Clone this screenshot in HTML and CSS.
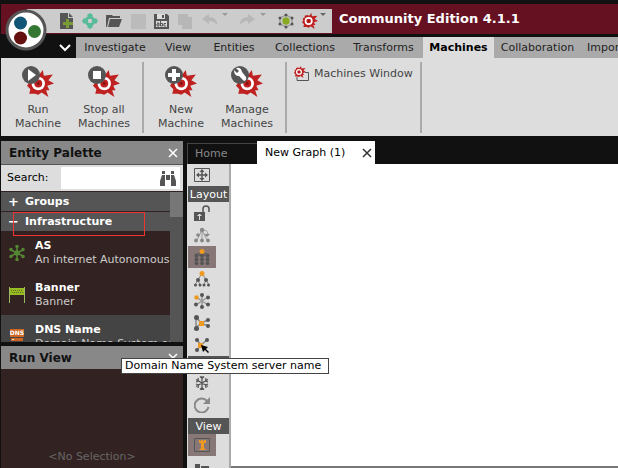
FILE: index.html
```
<!DOCTYPE html>
<html lang="en">
<head>
<meta charset="utf-8">
<title>Community Edition 4.1.1</title>
<link rel="stylesheet" href="styles.css">
</head>
<body>
<svg class="defs" aria-hidden="true">
  <symbol id="gear" viewBox="0 0 24 24">
    <path fill="#bf2020" d="M8 3l3 1 3-4 1 5 8-1-4 5 5 3-6 2 2 4-3 0 2 6-6-4-3 2-3-1-5 0 1-4-3-3 2-3-1-3 3-1 0-3z"/>
    <circle cx="10" cy="12" r="6" fill="#fff"/><circle cx="10" cy="12" r="3.500" fill="#bf2020"/><circle cx="10" cy="12" r="1.300" fill="#811"/>
  </symbol>
</svg>
<div class="app">
  <header class="titlebar">
    <button class="logo" aria-label="Application menu">
      <svg viewBox="0 0 42 42"><circle cx="21" cy="21" r="19" fill="#fff" stroke="#555" stroke-width="3"/><circle cx="15.500" cy="14" r="6.500" fill="#157"/><circle cx="29.500" cy="22.500" r="6.500" fill="#373"/><circle cx="15.500" cy="29" r="6.500" fill="#611"/></svg>
    </button>
    <div class="quick">
      <button aria-label="New"><svg viewBox="0 0 16 16"><path fill="#555" d="M2 0h8v5h5v11H2z"/><path fill="#555" d="M11 0l4 4h-4z"/><path fill="#7a9c35" d="M8 6h3v3h4v3h-4v3H8v-3H5V9h3z"/></svg></button>
      <button aria-label="Import"><svg viewBox="0 0 16 16"><circle cx="8" cy="8" r="3.700" fill="none" stroke="#5b9" stroke-width="3"/><path fill="#5b9" d="M5 2l3-2 3 2-2 3H7zM5 14l3 2 3-2-2-3H7zM2 5L0 8l2 3 3-2V7zM14 5l2 3-2 3-3-2V7z"/></svg></button>
      <button aria-label="Open"><svg viewBox="0 0 16 16"><path fill="#555" d="M0 2h6l1 1h7v2H3L1 14H0zM4 6h12l-3 8H2z"/></svg></button>
      <button aria-label="Save" disabled><svg viewBox="0 0 16 16"><path fill="#bbb" d="M1 1h15v15H1z"/></svg></button>
      <button aria-label="Save as"><svg viewBox="0 0 16 16"><path fill="#555" d="M0 1h13l2 2v13H0z"/><path fill="#ddd" d="M3 1h8v5H3zM2 8h11v6H2z"/><path fill="#555" d="M8 2h2v3H8z"/><path fill="none" stroke="#555" d="M3 10h2v3H3v-2h2M6.500 8v5h2v-2.500h-2M12 10.500h-2V13h2"/></svg></button>
      <button aria-label="Copy" disabled><svg viewBox="0 0 16 16"><path fill="#b7b7b7" d="M0 1h10v3h4v12H4v-4H0z"/></svg></button>
      <button class="drop" aria-label="Undo" disabled><svg viewBox="0 0 30 16"><path fill="#b7b7b7" d="M0 6l7-5v3q8 0 8 8-3-4-8-4v3z"/><path fill="#999" d="M20 0h6l-3 3z"/></svg></button>
      <button class="drop" aria-label="Redo" disabled><svg viewBox="0 0 30 16"><path fill="#b7b7b7" d="M15 6L8 1v3q-8 0-8 8 3-4 8-4v3z"/><path fill="#999" d="M20 0h6l-3 3z"/></svg></button>
      <button aria-label="Transform hub"><svg viewBox="0 0 16 16"><path fill="none" stroke="#888" d="M8 2l6 3v6l-6 3-6-3V5z"/><circle cx="8" cy="8" r="3.700" fill="#8a2"/><g fill="#555"><circle cx="8" cy="2" r="1.500"/><circle cx="14" cy="5" r="1.500"/><circle cx="14" cy="11" r="1.500"/><circle cx="8" cy="14" r="1.500"/><circle cx="2" cy="11" r="1.500"/><circle cx="2" cy="5" r="1.500"/></g></svg></button>
      <button class="drop" aria-label="Run machine"><svg viewBox="0 0 30 16"><use href="#gear" width="16" height="16"/><path fill="#666" d="M18 0h6l-3 3z"/></svg></button>
    </div>
    <h1>Community Edition 4.1.1</h1>
  </header>
  <nav class="tabs">
    <button class="chevron" aria-label="Collapse ribbon"><svg viewBox="0 0 12 8"><path fill="none" stroke="#fff" stroke-width="2" d="M1 1l5 5 5-5"/></svg></button>
    <a href="#">Investigate</a><a href="#">View</a><a href="#">Entities</a><a href="#">Collections</a><a href="#">Transforms</a><a href="#" class="active">Machines</a><a href="#">Collaboration</a><a href="#" class="last">Import | Export</a>
  </nav>
  <section class="ribbon">
    <div class="group">
      <button class="big"><svg viewBox="0 0 32 32"><use href="#gear" x="5" y="3" width="27" height="29"/><circle cx="9" cy="9" r="9" fill="#555"/><path fill="#fff" d="M6 3v12l8-6z"/></svg>Run<br>Machine</button>
      <button class="big"><svg viewBox="0 0 32 32"><use href="#gear" x="5" y="3" width="27" height="29"/><circle cx="9" cy="9" r="9" fill="#555"/><path fill="#fff" d="M5 5h8v8H5z"/></svg>Stop all<br>Machines</button>
    </div>
    <div class="group">
      <button class="big"><svg viewBox="0 0 32 32"><use href="#gear" x="5" y="3" width="27" height="29"/><circle cx="9" cy="9" r="9" fill="#555"/><path fill="#fff" d="M7 3h4v4h4v4h-4v4H7v-4H3V7h4z"/></svg>New<br>Machine</button>
      <button class="big"><svg viewBox="0 0 32 32"><use href="#gear" x="5" y="3" width="27" height="29"/><circle cx="9" cy="9" r="9" fill="#555"/><path fill="#fff" d="M3 4l3 3 2-2-3-3q5-1 6 4l4 5q1 3-2 4l-5-5q-5 0-5-6z"/></svg>Manage<br>Machines</button>
    </div>
    <div class="group wide">
      <button class="small"><svg viewBox="0 0 16 16"><path fill="none" stroke="#555" d="M11 6.500h3.500v8H3V11"/><use href="#gear" width="12" height="12"/></svg>Machines Window</button>
    </div>
  </section>
  <main class="work">
    <aside class="side">
      <section class="palette">
        <h2>Entity Palette<button aria-label="Close palette"><svg viewBox="0 0 10 10"><path stroke="#fff" stroke-width="1.500" d="M1 1l8 8M9 1L1 9"/></svg></button></h2>
        <div class="search">
          <label for="q">Search:</label>
          <div class="field"><input id="q" type="text"><svg viewBox="0 0 16 15"><path fill="#555" d="M2 0h3v3H2zM11 0h3v3h-3zM2 4h3v11H0v-5zM11 4h3l2 6v5h-5zM6 4h4v5H6z"/></svg></div>
        </div>
        <div class="scroller">
          <div class="list">
            <button class="cat"><span>+</span>Groups</button>
            <button class="cat marked"><span>−</span>Infrastructure</button>
            <div class="entity">
              <svg viewBox="0 0 16 16"><g stroke="#583" stroke-width="1.500" fill="#583"><path d="M8 2v12M2 5l12 6M14 5L2 11"/><circle cx="8" cy="8" r="2"/><circle cx="8" cy="1.500" r="1"/><circle cx="8" cy="14.500" r="1"/><circle cx="2" cy="4.500" r="1"/><circle cx="14" cy="4.500" r="1"/><circle cx="2" cy="11.500" r="1"/><circle cx="14" cy="11.500" r="1"/></g></svg>
              <div><b>AS</b><p>An internet Autonomous System</p></div>
            </div>
            <div class="entity">
              <svg viewBox="0 0 16 16"><path fill="#9b2" d="M1 1h14v7H1z"/><path stroke="#9b6" d="M.5 0v16M15.500 0v16"/><path stroke="#562" stroke-dasharray="1 1" d="M2 3.500h12M3 5.500h11"/></svg>
              <div><b>Banner</b><p>Banner</p></div>
            </div>
            <div class="entity hover">
              <svg viewBox="0 0 16 16"><path fill="#c62" d="M1 0h14v8H1zM2 9h12v3H2zM1 13h14v3H1z"/><text x="8" y="6">DNS</text><path stroke="#ddd" d="M3 10.500h2M3 14.500h2"/></svg>
              <div><b>DNS Name</b><p>Domain Name System server name</p></div>
            </div>
          </div>
          <div class="track"><div class="thumb"></div></div>
        </div>
      </section>
      <section class="run">
        <h2>Run View<button aria-label="Close run view"><svg viewBox="0 0 10 10"><path stroke="#fff" stroke-width="1.500" d="M1 1l8 8M9 1L1 9"/></svg></button></h2>
        <p>&lt;No Selection&gt;</p>
      </section>
    </aside>
    <section class="editor">
      <div class="docs">
        <a href="#">Home</a>
        <div class="doc">New Graph (1)<button aria-label="Close graph"><svg viewBox="0 0 10 10"><path stroke="#333" stroke-width="1.500" d="M1 1l8 8M9 1L1 9"/></svg></button></div>
      </div>
      <div class="stage">
        <div class="tools">
          <button aria-label="Fit"><svg viewBox="0 0 16 16"><path fill="none" stroke="#555" d="M.5 1.500h15v13H.5z"/><path stroke="#555" stroke-width="1.500" d="M8 4v8M3 8h10"/><path fill="#555" d="M8 2l2.500 3h-5zM8 14l2.500-3h-5zM2 8l3-2.500v5zM14 8l-3-2.500v5z"/></svg></button>
          <h3>Layout</h3>
          <button aria-label="Lock"><svg viewBox="0 0 16 16"><path fill="#555" d="M0 7h11v9H0z"/><path fill="none" stroke="#555" stroke-width="1.500" d="M9 7V4q0-3 3-3t3 3v3"/><path fill="#ddd" d="M5 9h1l2 2H6v4H5v-4H3z"/></svg></button>
          <button aria-label="Auto layout"><svg viewBox="0 0 16 16"><path fill="none" stroke="#999" d="M8 3L3 13M8 3v10M8 3l5 10M9 3q5 0 5 5"/><g fill="#888"><circle cx="8" cy="3" r="2.200"/><circle cx="4" cy="8" r="1.800"/><circle cx="2" cy="13.500" r="1.900"/><circle cx="8" cy="13.500" r="1.900"/><circle cx="14" cy="13.500" r="1.900"/><path d="M10 7h6l-3 3z"/></g></svg></button>
          <button class="on" aria-label="Block"><svg viewBox="0 0 16 16"><path fill="none" stroke="#555" d="M8 3L2 6v8M8 3v11M8 3l6 3v8M8 3L5 7M8 3l3 4"/><g fill="#555"><circle cx="2.500" cy="6.500" r="2"/><circle cx="8" cy="6.500" r="2"/><circle cx="13.500" cy="6.500" r="2"/><circle cx="2.500" cy="10.500" r="2"/><circle cx="8" cy="10.500" r="2"/><circle cx="13.500" cy="10.500" r="2"/><circle cx="2.500" cy="14.300" r="1.800"/><circle cx="8" cy="14.300" r="1.800"/><circle cx="13.500" cy="14.300" r="1.800"/></g><circle cx="8" cy="2.500" r="2.500" fill="#e92"/></svg></button>
          <button aria-label="Hierarchical"><svg viewBox="0 0 16 16"><path fill="none" stroke="#888" d="M8 2L1 14M8 2l7 12M4 9l2 5M12 9l-2 5"/><g fill="#555"><circle cx="4" cy="9" r="2"/><circle cx="12" cy="9" r="2"/><circle cx="1.500" cy="14" r="1.500"/><circle cx="6" cy="14" r="1.500"/><circle cx="10" cy="14" r="1.500"/><circle cx="14.500" cy="14" r="1.500"/></g><circle cx="8" cy="2.500" r="2.500" fill="#e92"/></svg></button>
          <button aria-label="Circular"><svg viewBox="0 0 16 16"><path stroke="#999" stroke-width="1.500" d="M8 1v14M2 4l12 8M14 4L2 12"/><g fill="#555"><circle cx="8" cy="2" r="2"/><circle cx="14" cy="4.500" r="2"/><circle cx="14" cy="11.500" r="2"/><circle cx="8" cy="14" r="2"/><circle cx="2" cy="11.500" r="2"/></g><circle cx="2.500" cy="4.500" r="2.200" fill="#e92"/></svg></button>
          <button aria-label="Organic"><svg viewBox="0 0 16 16"><path fill="none" stroke="#888" stroke-width="1.500" d="M2 2v11l5-5 7-3M2 2l5 6 7 3"/><g fill="#555"><circle cx="2.500" cy="2.500" r="2.500"/><circle cx="2.500" cy="13.500" r="2.500"/><circle cx="14" cy="5" r="2"/><circle cx="14" cy="11" r="2"/></g><path fill="#e92" d="M5 6h5v5H5z"/></svg></button>
          <button aria-label="Interactive organic"><svg viewBox="0 0 16 16"><path fill="none" stroke="#888" stroke-width="1.500" d="M3 3l4 5 6-5M7 8l-4 5"/><g fill="#555"><circle cx="3" cy="3" r="2"/><circle cx="13" cy="3" r="2"/><circle cx="3" cy="13" r="2"/></g><path fill="#e92" d="M4 6h5v5H4z"/><path fill="#000" d="M7 8l7 2-2 2 3 3-1 1-3-3-2 2z"/></svg></button>
          <h3></h3>
          <button aria-label="Freeze"><svg viewBox="0 0 16 16"><path fill="none" stroke="#555" stroke-width="1.200" d="M8 1v14M2 4.500l12 7M14 4.500l-12 7M6 1.500l2 2 2-2M6 14.500l2-2 2 2M2 7l2.500-1L4 3M14 7l-2.500-1L12 3M2 9l2.500 1L4 13M14 9l-2.500 1 .5 3"/></svg></button>
          <button aria-label="Refresh"><svg viewBox="0 0 16 16"><path fill="none" stroke="#888" stroke-width="2" d="M13 4a7 7 0 1 0 1.500 6"/><path fill="#888" d="M16 0v7H9z"/></svg></button>
          <h3 class="view">View</h3>
          <button class="on" aria-label="Main view"><svg viewBox="0 0 16 16"><path fill="none" stroke="#555" d="M.5 1.500h15v13H.5z"/><path fill="#e92" d="M5 3h1v1h1V3h2v1h1V3h2v3h-2v5l2 2H5l2-2V6H5z"/></svg></button>
          <button aria-label="Link size"><svg viewBox="0 0 16 16"><path fill="#555" d="M1 5h5v6H1zM7 7h8v2H7z"/></svg></button>
        </div>
        <div class="canvas"></div>
      </div>
    </section>
  </main>
  <div class="tooltip" role="tooltip">Domain Name System server name</div>
</div>
</body>
</html>
```
FILE: styles.css
```
* { box-sizing: border-box; }
body { margin: 0; background: #111; font: 11px/14px "DejaVu Sans", sans-serif; color: #222; }
button { padding: 0; border: 0; background: none; font: inherit; color: inherit; }
a { color: inherit; text-decoration: none; }
h1, h2, h3, p { margin: 0; }
svg { display: block; }
.defs { position: absolute; width: 0; height: 0; }
.app { position: relative; display: flex; flex-direction: column; height: 100vh; overflow: hidden; padding: 4px 0 0 1px; }

.titlebar { position: relative; flex: none; display: flex; height: 30px; padding: 5px 0 1px 26px; background: #661122; }
.logo { position: absolute; z-index: 2; left: 4px; top: 5px; }
.logo svg { width: 42px; height: 42px; }
.quick { display: flex; align-items: flex-start; gap: 8px; width: 305px; padding: 4px 0 0 31px; background: #ccc; }
.quick svg { width: 16px; height: 16px; }
.quick .drop svg { width: 30px; }
h1 { padding-left: 7px; font-size: 13px; line-height: 20px; color: #fff; white-space: nowrap; }

.tabs { flex: none; display: grid; grid-template-columns: 75px 78px 48px 64px 78px 79px 71px 87px 1fr; height: 24px; padding-top: 3px; overflow: hidden; white-space: nowrap; }
.tabs a { background: #aaa; line-height: 22px; text-align: center; }
.tabs .active { background: #ddd; font-weight: bold; color: #000; }
.tabs .last { min-width: 0; padding-left: 6px; text-align: left; }
.chevron { display: flex; justify-content: flex-end; align-items: center; padding-right: 5px; }
.chevron svg { width: 12px; height: 8px; }

.ribbon { flex: none; display: flex; height: 78px; padding: 4px 0 3px; background: #ddd; color: #444; }
.group { display: flex; align-items: flex-start; padding: 0 5px 0 4px; border-right: 2px solid #aaa; }
.wide { padding: 0 7px; }
.big { width: 66px; padding-top: 4px; text-align: center; }
.big svg { width: 32px; height: 32px; margin: 0 auto 5px; }
.small { display: flex; align-items: center; gap: 4px; padding-top: 4px; }
.small svg { width: 16px; height: 16px; }

.work { flex: 1; display: flex; min-height: 0; padding-top: 5px; }
.side { flex: none; display: flex; flex-direction: column; gap: 4px; width: 182px; margin-right: 4px; }
h2 { display: flex; justify-content: space-between; align-items: center; height: 23px; padding: 0 5px 0 8px; background: #888; font-size: 12px; color: #111; }
h2 svg, .doc svg { width: 10px; height: 10px; }
.palette { flex: none; height: 201px; display: flex; flex-direction: column; }
.search { flex: none; display: flex; align-items: center; justify-content: space-between; height: 28px; padding: 0 3px 0 6px; border-top: 1px solid #555; border-bottom: 1px solid #322; background: #ddd; color: #000; }
.field { display: flex; align-items: center; width: 119px; height: 22px; padding-right: 4px; background: #fff; }
.field input { flex: 1; min-width: 0; border: 0; background: none; font: inherit; outline: 0; }
.field svg { width: 16px; height: 15px; }
.scroller { flex: 1; display: flex; min-height: 0; }
.list { flex: 1; min-width: 0; overflow: hidden; background: #322; }
.cat { position: relative; display: flex; width: 100%; height: 19px; margin-bottom: 1px; padding-left: 7px; align-items: center; background: #555; color: #fff; font-weight: bold; }
.cat span { width: 17px; text-align: left; font-size: 13px; }
.marked { margin-bottom: 0; }
.marked::after { content: ""; position: absolute; left: 12px; top: 0; width: 130px; height: 22px; border: 1px solid #e33; }
.entity { display: flex; align-items: center; gap: 10px; height: 42px; padding: 2px 0 0 8px; color: #ccc; white-space: nowrap; }
.entity svg { flex: none; width: 16px; height: 16px; }
.entity b { color: #fff; }
.entity text { fill: #fff; font-size: 6px; font-weight: bold; text-anchor: middle; }
.hover { background: #444; }
.track { flex: none; width: 13px; background: #555; }
.thumb { height: 25px; background: #777; }
.run { flex: 1; display: flex; flex-direction: column; }
.run p { flex: 1; display: flex; align-items: flex-end; justify-content: center; padding-bottom: 4px; background: #322; color: #666; }

.editor { flex: 1; min-width: 0; display: flex; flex-direction: column; }
.docs { flex: none; display: flex; align-items: flex-end; height: 23px; }
.docs a { width: 70px; height: 21px; padding-left: 7px; border: 1px solid #444; border-width: 1px 0 0 1px; line-height: 20px; color: #888; }
.doc { display: flex; align-items: center; justify-content: space-between; width: 118px; height: 23px; padding: 0 3px 0 8px; background: #fff; color: #000; }
.stage { flex: 1; display: flex; min-height: 0; }
.tools { flex: none; width: 44px; overflow: hidden; padding-left: 1px; border-right: 2px solid #aaa; background: #ddd; }
.tools button { display: flex; width: 28px; height: 22px; align-items: center; justify-content: center; }
.tools button svg { width: 16px; height: 16px; }
.tools .on { background: #877; }
h3 { height: 16px; overflow: hidden; background: #555; font-size: 11px; font-weight: normal; line-height: 17px; color: #fff; text-align: center; }
.view { margin-top: 2px; }
.canvas { flex: 1; background: #fff; border-bottom: 2px solid #777; }

.tooltip { position: absolute; left: 121px; top: 358px; padding: 0 7px 0 3px; border: 1px solid #444; background: #fff; color: #000; white-space: nowrap; }
```
